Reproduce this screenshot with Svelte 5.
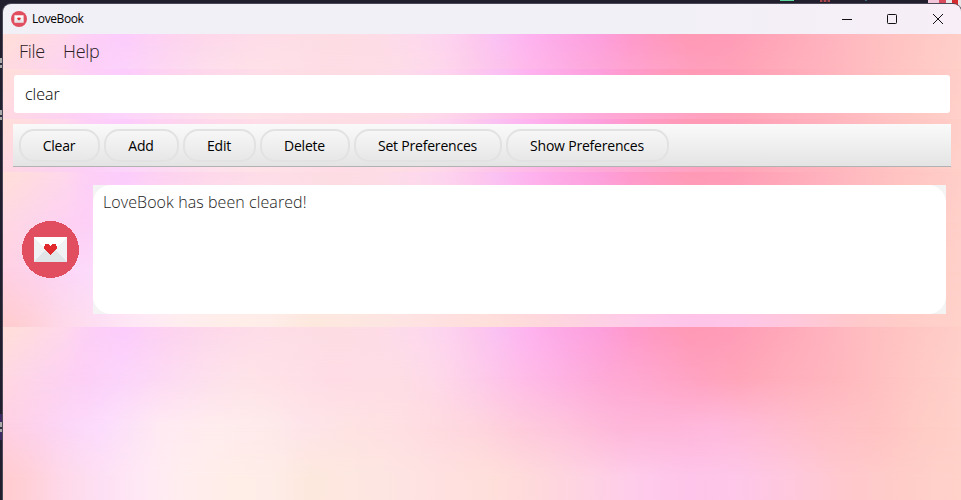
<script>
  const rows = [
    { y: 0, stops: [[3,'ffdfd9'],[30,'ffdce0'],[65,'ffd8ec'],[85,'fdd0f6'],[125,'fcccfc'],[150,'fdd0f5'],[180,'fdd4ee'],[220,'fed9ea'],[270,'fedde8'],[335,'fddde3'],[380,'fedce7'],[420,'fdd9ee'],[450,'fdd2f0'],[475,'fdc8ee'],[495,'fac2f4'],[530,'feb2f0'],[570,'fda6e4'],[600,'fd9fdd'],[630,'ff99cc'],[660,'ff99bf'],[690,'ff99b5'],[730,'ff9bb7'],[760,'ffa3b8'],[800,'ffacbb'],[850,'ffb9c0'],[900,'ffc4c2'],[961,'ffcec8']] },
    { y: 50, stops: [[3,'ffd8e2'],[40,'fdd4ec'],[85,'fdcff6'],[120,'fcd4fb'],[160,'fdd9f4'],[210,'fde0ec'],[250,'fee3e8'],[330,'ffdce6'],[400,'fedde5'],[440,'fed8e9'],[480,'fdcbea'],[520,'ffbde8'],[560,'feb2e3'],[600,'feaad8'],[660,'ffa5cb'],[700,'ffa2c0'],[740,'ffa5b9'],[780,'ffadbc'],[840,'ffb7be'],[900,'ffc5c3'],[961,'ffd0c9']] },
    { y: 100, stops: [[3,'ffd0e2'],[40,'fdd2ee'],[70,'fcd7f8'],[100,'fcdcfd'],[135,'fde4f6'],[160,'ffeaf2'],[210,'ffecee'],[270,'feeaea'],[300,'fee5ea'],[350,'fee3e3'],[400,'ffdfe2'],[480,'fed5de'],[520,'fecbdc'],[560,'fec4dc'],[620,'feb7d9'],[670,'feb6d9'],[720,'ffb9dc'],[770,'ffbcd2'],[820,'ffbfc8'],[880,'ffc3c3'],[930,'ffcdc6'],[961,'ffd0c9']] },
    { y: 150, stops: [[3,'ffcccf'],[30,'ffd0d8'],[60,'fed8e8'],[100,'fddff3'],[140,'ffe8f5'],[180,'ffedef'],[230,'ffede8'],[270,'feece8'],[310,'fde8dd'],[350,'fde7e0'],[400,'fde4e2'],[440,'ffe0e0'],[490,'ffdfda'],[540,'fed8dc'],[600,'fed0e4'],[640,'fecaea'],[690,'fec4e9'],[740,'fec6e7'],[800,'ffc8da'],[850,'ffc8cc'],[900,'ffccc8'],[961,'ffd1c9']] }
  ];
  const layers = rows.map((r, i) => {
    const g = `linear-gradient(90deg, ${r.stops.map(([x, c]) => `#${c} ${x - 3}px`).join(', ')})`;
    const m = i ? `linear-gradient(180deg, transparent ${rows[i - 1].y}px, #000 ${r.y}px)` : 'none';
    return `background: ${g}; mask-image: ${m}`;
  });
  const commands = [
    { label: 'Clear', width: 81 },
    { label: 'Add', width: 75 },
    { label: 'Edit', width: 73 },
    { label: 'Delete', width: 90 },
    { label: 'Set Preferences', width: 148 },
    { label: 'Show Preferences', width: 163 }
  ];
</script>

{#snippet wallpaper()}
  <div class="wallpaper">
    {#each layers as layer}<div style={layer}></div>{/each}
  </div>
{/snippet}

{#snippet logo(size)}
  <svg width={size} height={size} viewBox="0 0 57 57">
    <circle cx="28.5" cy="28.5" r="28.5" fill="#e04e60" />
    <path d="M12 16h33v25H12z" fill="#f0f2f3" />
    <path d="M12 41l12-13h9l12 13z" fill="#e2e5e7" />
    <path d="M12 16h33L32 30h-7z" fill="#fff" />
    <path d="M28.5 34L23.2 29C22 27.8 22 26.2 22.3 25C23.2 22.4 27 22 28.5 24.6C30 22 33.8 22.4 34.7 25C35 26.2 35 27.8 33.8 29z" fill="#e02a2e" />
  </svg>
{/snippet}

<div class="desktop">
  <span class="blip green"></span>
  <span class="blip red"></span>
  <span class="blip teal"></span>
  <span class="blip pink"></span>
  <span class="edge" style="top: 58px"></span>
  <span class="edge" style="top: 110px"></span>
  <span class="selection"></span>
  <span class="edge" style="top: 422px"></span>

  <main class="window">
    <header class="titlebar">
      {@render logo(16)}
      <span class="title">LoveBook</span>
      <div class="controls">
        <svg width="10" height="10"><path d="M0 5.5h10" /></svg>
        <svg width="10" height="10"><rect x=".5" y=".5" width="9" height="9" rx=".8" /></svg>
        <svg width="10" height="10"><path d="M0 0l10 10M10 0L0 10" /></svg>
      </div>
    </header>

    <nav class="section menu">
      {@render wallpaper()}
      <span class="file">File</span>
      <span class="help">Help</span>
    </nav>

    <section class="section command">
      {@render wallpaper()}
      <div class="field"><span>clear</span></div>
    </section>

    <section class="section tools">
      {@render wallpaper()}
      <div class="toolbar">
        {#each commands as c}
          <button style="width: {c.width}px">{c.label}</button>
        {/each}
      </div>
    </section>

    <section class="section result">
      {@render wallpaper()}
      <div class="avatar">{@render logo(57)}</div>
      <div class="frame"><div class="message"><span>LoveBook has been cleared!</span></div></div>
    </section>

    <section class="section list">{@render wallpaper()}</section>
  </main>
</div>

<style>
  :global(body) { margin: 0; overflow: hidden; }
  .desktop {
    position: relative;
    box-sizing: border-box;
    width: 961px;
    height: 500px;
    padding: 4px 0 0 3px;
    overflow: hidden;
    background: #211e2e;
    font-family: "Open Sans", "Noto Sans", sans-serif;
  }
  .window {
    position: relative;
    display: flex;
    flex-direction: column;
    height: 496px;
    border-radius: 8px 8px 0 0;
    overflow: hidden;
    box-shadow: 0 0 0 1px #4b4858;
  }
  .titlebar {
    display: flex;
    align-items: center;
    flex: 0 0 30px;
    box-sizing: border-box;
    padding: 0 18px 0 8px;
    background: linear-gradient(90deg, #f2f0f7 70%, #f7eef7);
  }
  .title { margin-left: 5px; font-size: 12px; line-height: 16px; letter-spacing: -0.4px; color: #000; }
  .controls { display: flex; gap: 36px; margin-left: auto; }
  .controls svg { fill: none; stroke: #111; stroke-width: 1; overflow: visible; }
  .controls svg:first-child { margin-right: -1px; }
  .section { position: relative; display: flex; box-sizing: border-box; overflow: hidden; }
  .section > :not(.wallpaper) { position: relative; }
  .section > .wallpaper, .wallpaper div { position: absolute; inset: 0; }
  .menu { flex: 0 0 35px; padding: 0 0 1px 16px; align-items: center; font-size: 18px; font-weight: 300; color: #2b2024; }
  .file { width: 44px; letter-spacing: -0.3px; }
  .help { letter-spacing: -0.3px; }
  .command { flex: 0 0 50px; padding: 6px 11px; }
  .field {
    display: flex;
    align-items: center;
    flex: 1;
    padding-left: 11px;
    border-radius: 3px;
    background: #fff;
    font-size: 16px;
    font-weight: 300;
    color: #000;
  }
  .tools { flex: 0 0 53px; padding: 5px 10px; }
  .toolbar {
    display: flex;
    gap: 4px;
    flex: 1;
    box-sizing: border-box;
    height: 43px;
    padding: 5px 6px 4px;
    border-bottom: 1px solid #b2b2b2;
    background: linear-gradient(#fafafa, #e4e4e4);
  }
  button {
    height: 33px;
    box-sizing: border-box;
    padding: 0 1px 0 0;
    border: 2px solid #e2e2e2;
    border-radius: 15px;
    background: transparent;
    font: 14px/20px "Open Sans", "Noto Sans", sans-serif;
    letter-spacing: -0.2px;
    white-space: nowrap;
    color: #000;
  }
  .result { flex: 0 0 155px; padding: 13px 15px 13px 19px; align-items: stretch; }
  .avatar { display: flex; align-items: center; width: 71px; }
  .avatar :global(svg) { shape-rendering: crispEdges; }
  .frame { flex: 1; background: #f4f4f4; }
  .message {
    box-sizing: border-box;
    height: 129px;
    padding: 5px 10px;
    border-radius: 18px;
    background: #fff;
    font-size: 16px;
    line-height: 24px;
    letter-spacing: 0.08px;
    font-weight: 300;
    color: #222;
  }
  .list { flex: 1; }
  .blip, .edge, .selection { position: absolute; }
  .green { left: 780px; top: 0; width: 14px; height: 1px; background: #5fd8a0; }
  .red { left: 820px; top: 0; width: 10px; height: 2px; background: repeating-linear-gradient(90deg, #a8464a 0 2px, #5a2d3a 2px 4px); }
  .teal { left: 865px; top: 0; width: 2px; height: 1px; background: #3d6b75; }
  .pink { left: 928px; top: 0; width: 33px; height: 12px; background: linear-gradient(90deg, #f3c5da 11px, #d94a5c 11px 18px, #e8e6e8 18px 24px, #d52b2f 24px 30px, #e8e6e8 30px); }
  .edge { left: 0; width: 2px; height: 10px; background: linear-gradient(#a9a9a9 5px, #302c3d 5px 7px, #a9a9a9 7px); }
  .selection { left: 0; top: 414px; width: 3px; height: 26px; background: #3f2b63; }
</style>
